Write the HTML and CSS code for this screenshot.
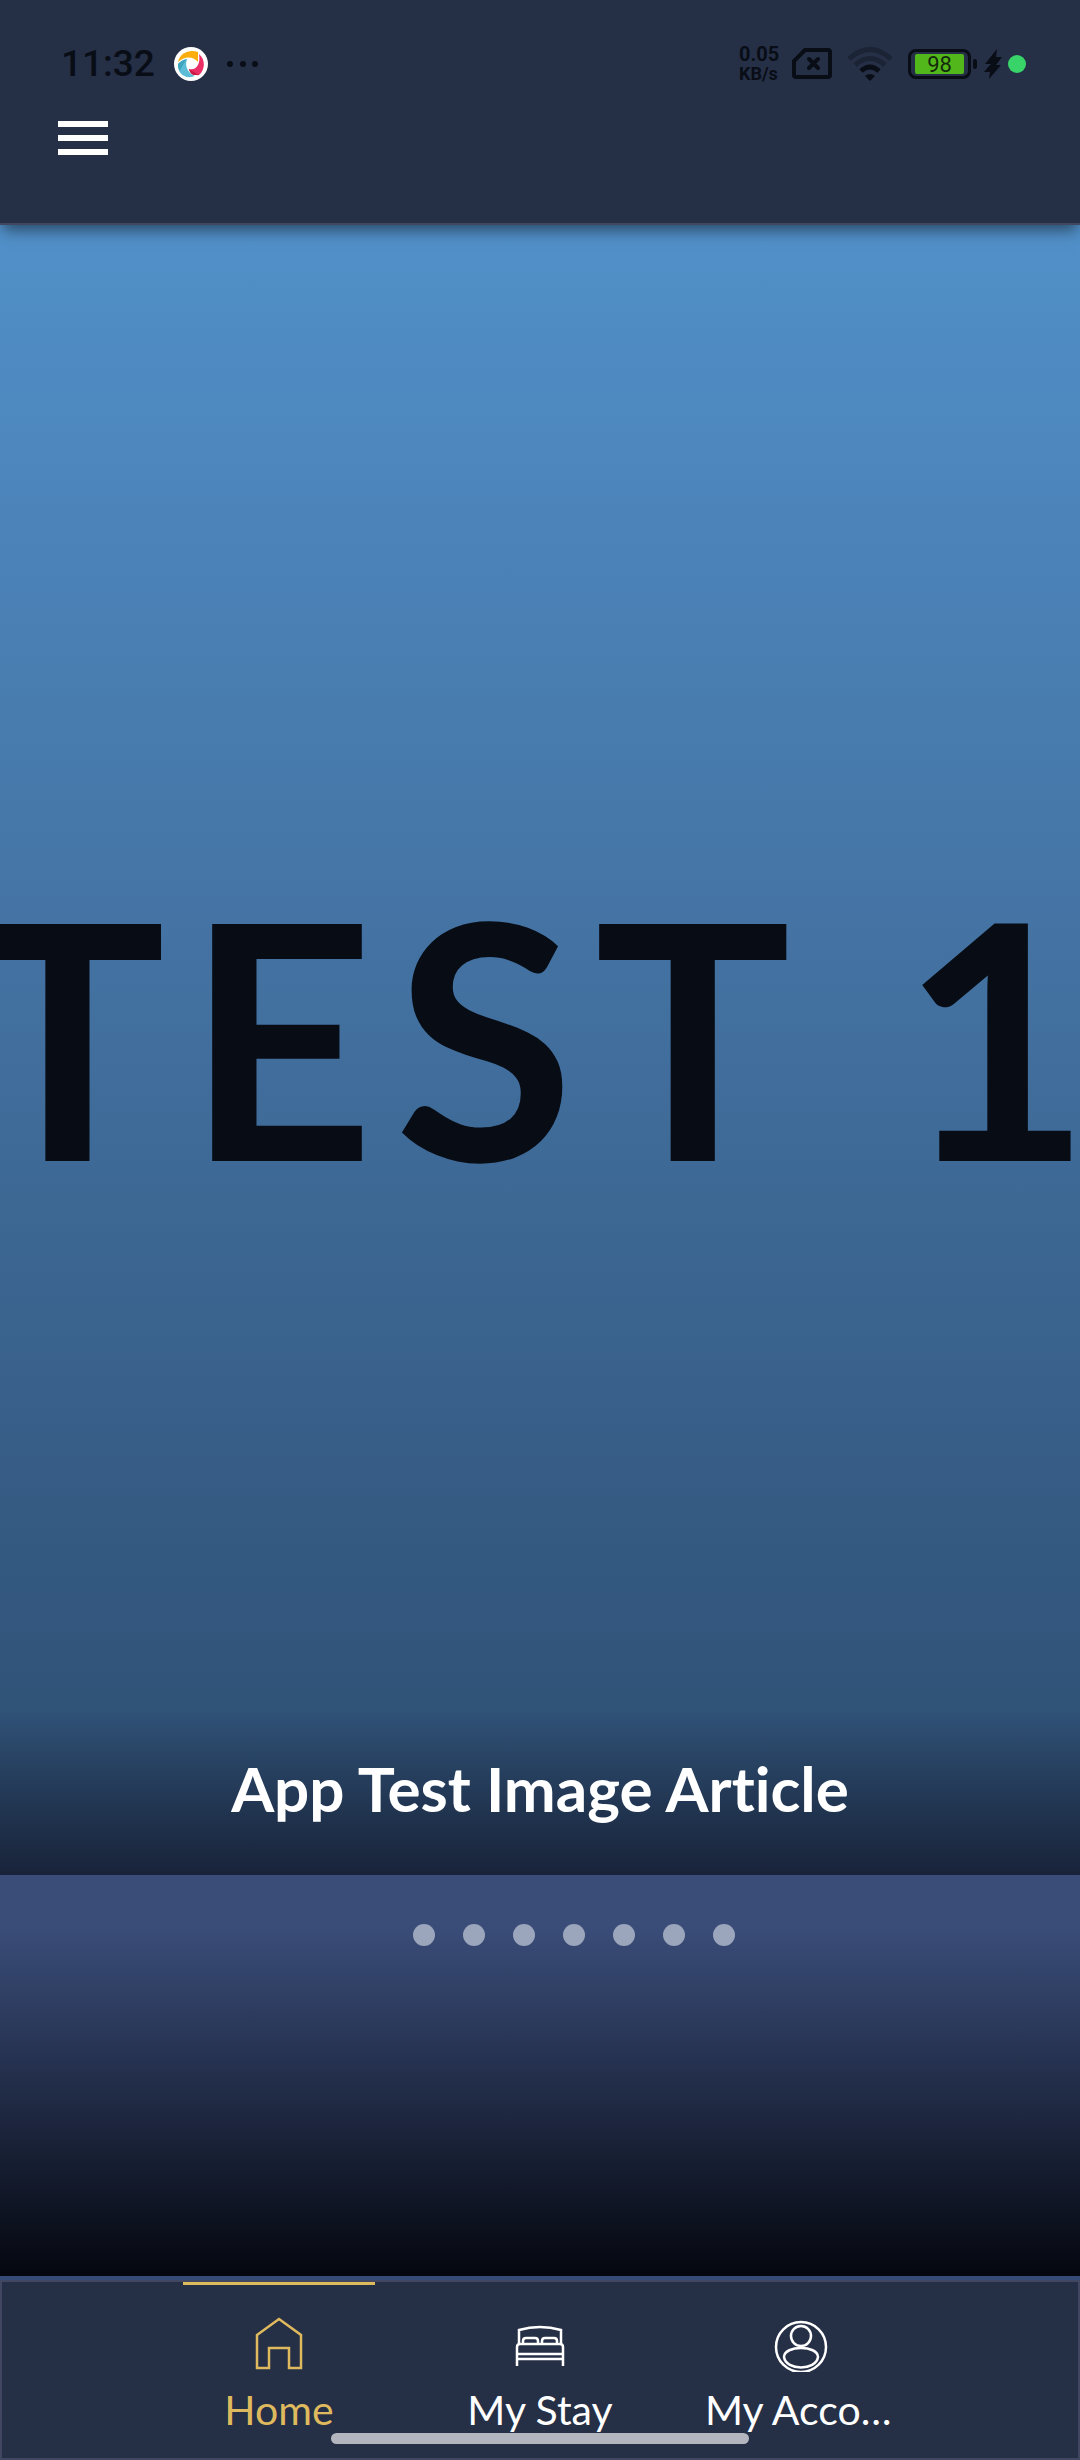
FILE: index.html
```html
<!DOCTYPE html>
<html lang="en">
<head>
<meta charset="utf-8">
<meta name="viewport" content="width=device-width, initial-scale=1">
<title>Home</title>
<link rel="stylesheet" href="styles.css">
</head>
<body>
<div class="app">
  <header class="top">
    <div class="status">
      <div class="status-left">
        <span class="clock">11:32</span>
        <svg class="app-badge" viewBox="0 0 34 34" aria-hidden="true">
          <circle cx="17" cy="17" r="17" fill="#fff"/>
          <path d="M4 15C6 6 15 2 24 5V15C20 10 12 8 4 15Z" fill="#fdae0d"/>
          <path d="M25 7C32 13 31 23 25 28C21 29 17 26 15 22C22 24 27 17 25 7Z" fill="#ec2e66"/>
          <path d="M15 22L25 28L19 28C17 27 15 24 15 22Z" fill="#c91a45"/>
          <path d="M4 17C7 14 9 13 13 12C10 20 15 27 21 29C11 33 3 26 4 17Z" fill="#5cbdd6"/>
          <path d="M4 17C7 14 9 13 13 12C9 17 8 20 6 24C4 22 4 19 4 17Z" fill="#3fa5bf"/>
        </svg>
        <svg class="more" viewBox="0 0 32 6" aria-hidden="true"><circle cx="3" cy="3" r="3"/><circle cx="16" cy="3" r="3"/><circle cx="28" cy="3" r="3"/></svg>
      </div>
      <div class="status-right">
        <span class="speed"><span class="rate">0.05</span><span class="unit">KB/s</span></span>
        <svg class="sim" viewBox="0 0 40 32" aria-hidden="true"><path d="M13 2H36Q38 2 38 4V27Q38 29 36 29H4Q2 29 2 27V13Z"/><path d="M17 11L26 20M26 11L17 20" stroke-linecap="round"/></svg>
        <svg class="wifi" viewBox="0 0 46 34" aria-hidden="true"><g class="weak"><path d="M2 12Q23-7 44 12"/><path d="M8 18Q23 5 38 18"/></g><path d="M14 24Q23 16 32 24"/><path class="tip" d="M18 29Q23 25 28 29L23 34Z"/></svg>
        <span class="battery"><span class="charge">98</span></span>
        <svg class="bolt" viewBox="0 0 18 30" aria-hidden="true"><path d="M13 0L1 15H7L5 17L0 23H6L5 30L17 16H12L18 8H12Z"/></svg>
        <span class="mic"></span>
      </div>
    </div>
    <button class="menu" aria-label="Menu"><span></span><span></span><span></span></button>
  </header>
  <main class="main">
    <article class="hero">
      <div class="art">TEST 1</div>
      <h1 class="title">App Test Image Article</h1>
    </article>
    <div class="dots">
      <button aria-label="Slide 1"></button><button aria-label="Slide 2"></button><button aria-label="Slide 3"></button><button aria-label="Slide 4"></button><button aria-label="Slide 5"></button><button aria-label="Slide 6"></button><button aria-label="Slide 7"></button>
    </div>
  </main>
  <nav class="tabs">
    <a class="tab active" href="#home">
      <svg viewBox="0 0 56 56" aria-hidden="true"><path d="M6 19L28 3L50 19V52H38V32H18V52H6Z"/></svg>
      <span>Home</span>
    </a>
    <a class="tab" href="#stay">
      <svg viewBox="0 0 56 56" aria-hidden="true"><path d="M7 28V14Q28 8 49 14V28M5 50V31Q5 28 8 28H48Q51 28 51 31V50M5 38H51M5 43H51M11 28V25Q11 22 14 22H23Q26 22 26 25V28M30 28V25Q30 22 33 22H42Q45 22 45 25V28"/></svg>
      <span>My Stay</span>
    </a>
    <a class="tab" href="#account">
      <svg viewBox="0 0 56 56" aria-hidden="true"><circle cx="28" cy="31" r="25"/><circle cx="28" cy="20" r="10"/><path d="M11 41C11 29 45 29 45 41C43 55 13 55 11 41Z"/></svg>
      <span>My Account</span>
    </a>
  </nav>
  <div class="handle"></div>
</div>
</body>
</html>
```
FILE: styles.css
```css
* { box-sizing: border-box; }

body {
  margin: 0;
  background: #374b77;
  font-family: Lato, sans-serif;
}

button { padding: 0; border: 0; background: none; }

.app {
  position: relative;
  display: flex;
  flex-direction: column;
  min-height: 100vh;
}

.top {
  position: relative;
  z-index: 1;
  padding: 44px 54px 68px 58px;
  border-bottom: 2px solid #414760;
  background: #252f46;
  box-shadow: 0 8px 14px -3px rgba(0, 0, 0, .5);
}

.status, .status-left, .status-right { display: flex; align-items: center; }
.status { justify-content: space-between; height: 40px; color: #090d16; font-family: Roboto, sans-serif; }
.status svg { fill: #090d16; }

.clock { padding-left: 3px; font-size: 37px; line-height: 40px; font-weight: 500; }
.app-badge { width: 34px; height: 34px; margin-left: 19px; }
.more { width: 32px; height: 6px; margin-left: 19px; }

.speed { display: flex; flex-direction: column; width: 42px; line-height: 19px; font-weight: 700; }
.rate { font-size: 20px; }
.unit { font-size: 18px; }
.sim { width: 40px; height: 32px; margin-left: 11px; }
.status .sim { fill: none; stroke: #090d16; stroke-width: 4; }
.wifi { width: 46px; height: 34px; margin-left: 15px; }
.status .wifi { fill: none; stroke: #090d16; stroke-width: 5; }
.status .weak { stroke: #1b2435; }
.status .tip { fill: #090d16; stroke: none; }
.battery {
  position: relative;
  width: 63px;
  height: 30px;
  margin-left: 15px;
  padding: 2px 4px;
  border: 3px solid #090d16;
  border-radius: 8px;
}
.battery::after {
  content: "";
  position: absolute;
  top: 7px;
  right: -9px;
  width: 4px;
  height: 10px;
  border-radius: 2px;
  background: #090d16;
}
.charge { display: block; height: 20px; background: #51b71a; color: #142a0c; border-radius: 2px; font-size: 22px; line-height: 22px; text-align: center; }
.bolt { width: 18px; height: 30px; margin-left: 13px; }
.mic { width: 18px; height: 18px; margin-left: 6px; border-radius: 50%; background: #38d46a; }

.menu { display: flex; flex-direction: column; gap: 8px; margin-top: 37px; }
.menu span { width: 50px; height: 6px; background: #fff; }

.main {
  flex: 1;
  display: flex;
  flex-direction: column;
  border-bottom: 4px solid #374b77;
  background: linear-gradient(#3a4d79 1700px, #05070f);
}

.hero {
  display: grid;
  flex: 1;
  background: linear-gradient(transparent 90%, rgba(21, 28, 48, .85)), linear-gradient(#5190c9, #4575a6 40%, #2c4c6f);
}
.art, .title { grid-area: 1 / 1; min-width: 0; }
.art {
  display: flex;
  align-items: center;
  justify-content: center;
  overflow: hidden;
  padding-bottom: 32px;
  color: #080c14;
  font-size: 328px;
  line-height: 400px;
  font-weight: 700;
  letter-spacing: 20px;
  white-space: nowrap;
}
.title {
  align-self: end;
  margin: 0;
  padding: 0 20px 47px;
  color: #fff;
  font-size: 62px;
  line-height: 80px;
  font-weight: 700;
  font-variant-ligatures: none;
  text-align: center;
}

.dots { display: flex; justify-content: center; gap: 28px; height: 401px; padding: 49px 0 0 68px; }
.dots button { width: 22px; height: 22px; border-radius: 50%; background: #9ba5bb; }

.tabs {
  display: flex;
  justify-content: center;
  gap: 69px;
  height: 180px;
  border: 2px solid #414760;
  background: #252f46;
}
.tab {
  width: 192px;
  display: flex;
  flex-direction: column;
  align-items: center;
  padding-top: 31px;
  border-top: 3px solid transparent;
  color: #fff;
  font-size: 41px;
  line-height: 48px;
  text-decoration: none;
}
.tab svg { flex: none; width: 56px; height: 56px; margin-bottom: 14px; fill: none; stroke: currentColor; stroke-width: 2.5; }
.tab span { width: 100%; overflow: hidden; text-align: center; text-overflow: ellipsis; white-space: nowrap; }
.active { border-color: #dfb95d; color: #dfb95d; }

.handle {
  position: absolute;
  bottom: 16px;
  left: 50%;
  width: 418px;
  height: 11px;
  margin-left: -209px;
  border-radius: 6px;
  background: #b3b6be;
}
```
